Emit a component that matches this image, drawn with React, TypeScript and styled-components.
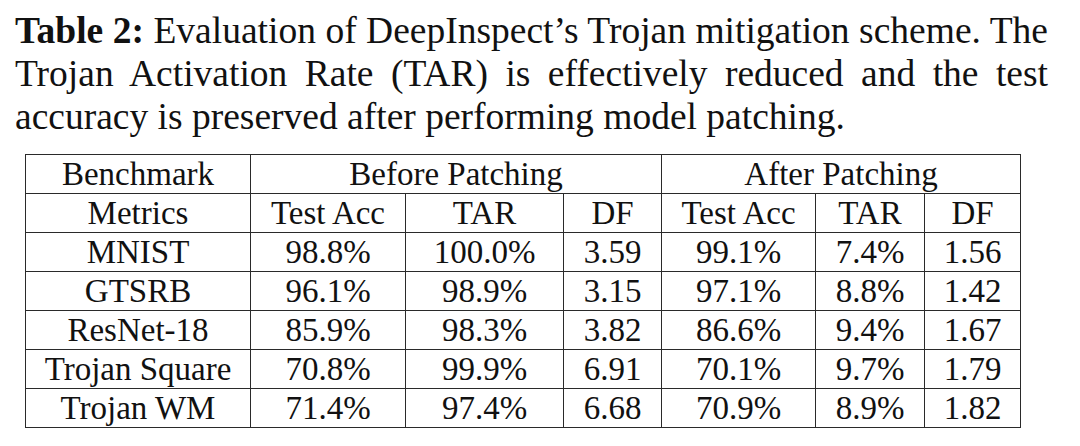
import { createGlobalStyle, styled } from "styled-components";

const GlobalStyle = createGlobalStyle`
  html, body {
    margin: 0;
    padding: 0;
    background: #fff;
  }
`;

const Page = styled.div`
  width: 1080px;
  height: 446px;
  box-sizing: border-box;
  padding: 9px 32px 0 15px;
  font-family: "Liberation Serif", "Times New Roman", serif;
  color: #111;
  overflow: hidden;
`;

const Caption = styled.div`
  width: 1033px;
  font-size: 37.5px;
  line-height: 43px;
  margin-bottom: 16px;
`;

const CaptionLine = styled.div<{ $last?: boolean }>`
  text-align: justify;
  text-align-last: ${({ $last }) => ($last ? "left" : "justify")};
  white-space: nowrap;
`;

const Label = styled.span`
  font-weight: 700;
`;

const Table = styled.table`
  margin-left: 10px;
  border-collapse: collapse;
  table-layout: fixed;
  width: 995px;
  font-size: 33px;
`;

const Cell = styled.td`
  border: 1.5px solid #2a2a2a;
  height: 38px;
  padding: 0;
  line-height: 38px;
  text-align: center;
  white-space: nowrap;
`;

const widths = [225, 155, 158, 98, 154, 109, 96];

const rows = [
  ["MNIST", "98.8%", "100.0%", "3.59", "99.1%", "7.4%", "1.56"],
  ["GTSRB", "96.1%", "98.9%", "3.15", "97.1%", "8.8%", "1.42"],
  ["ResNet-18", "85.9%", "98.3%", "3.82", "86.6%", "9.4%", "1.67"],
  ["Trojan Square", "70.8%", "99.9%", "6.91", "70.1%", "9.7%", "1.79"],
  ["Trojan WM", "71.4%", "97.4%", "6.68", "70.9%", "8.9%", "1.82"],
];

const metrics = ["Metrics", "Test Acc", "TAR", "DF", "Test Acc", "TAR", "DF"];

export default function App() {
  return (
    <Page>
      <GlobalStyle />
      <Caption>
        <CaptionLine>
          <Label>Table 2:</Label> Evaluation of DeepInspect’s Trojan mitigation scheme. The
        </CaptionLine>
        <CaptionLine>
          Trojan Activation Rate (TAR) is effectively reduced and the test
        </CaptionLine>
        <CaptionLine $last>
          accuracy is preserved after performing model patching.
        </CaptionLine>
      </Caption>
      <Table>
        <colgroup>
          {widths.map((w, i) => (
            <col key={i} style={{ width: w }} />
          ))}
        </colgroup>
        <tbody>
          <tr>
            <Cell>Benchmark</Cell>
            <Cell colSpan={3}>Before Patching</Cell>
            <Cell colSpan={3}>After Patching</Cell>
          </tr>
          <tr>
            {metrics.map((m, i) => (
              <Cell key={i}>{m}</Cell>
            ))}
          </tr>
          {rows.map((r) => (
            <tr key={r[0]}>
              {r.map((v, i) => (
                <Cell key={i}>{v}</Cell>
              ))}
            </tr>
          ))}
        </tbody>
      </Table>
    </Page>
  );
}
